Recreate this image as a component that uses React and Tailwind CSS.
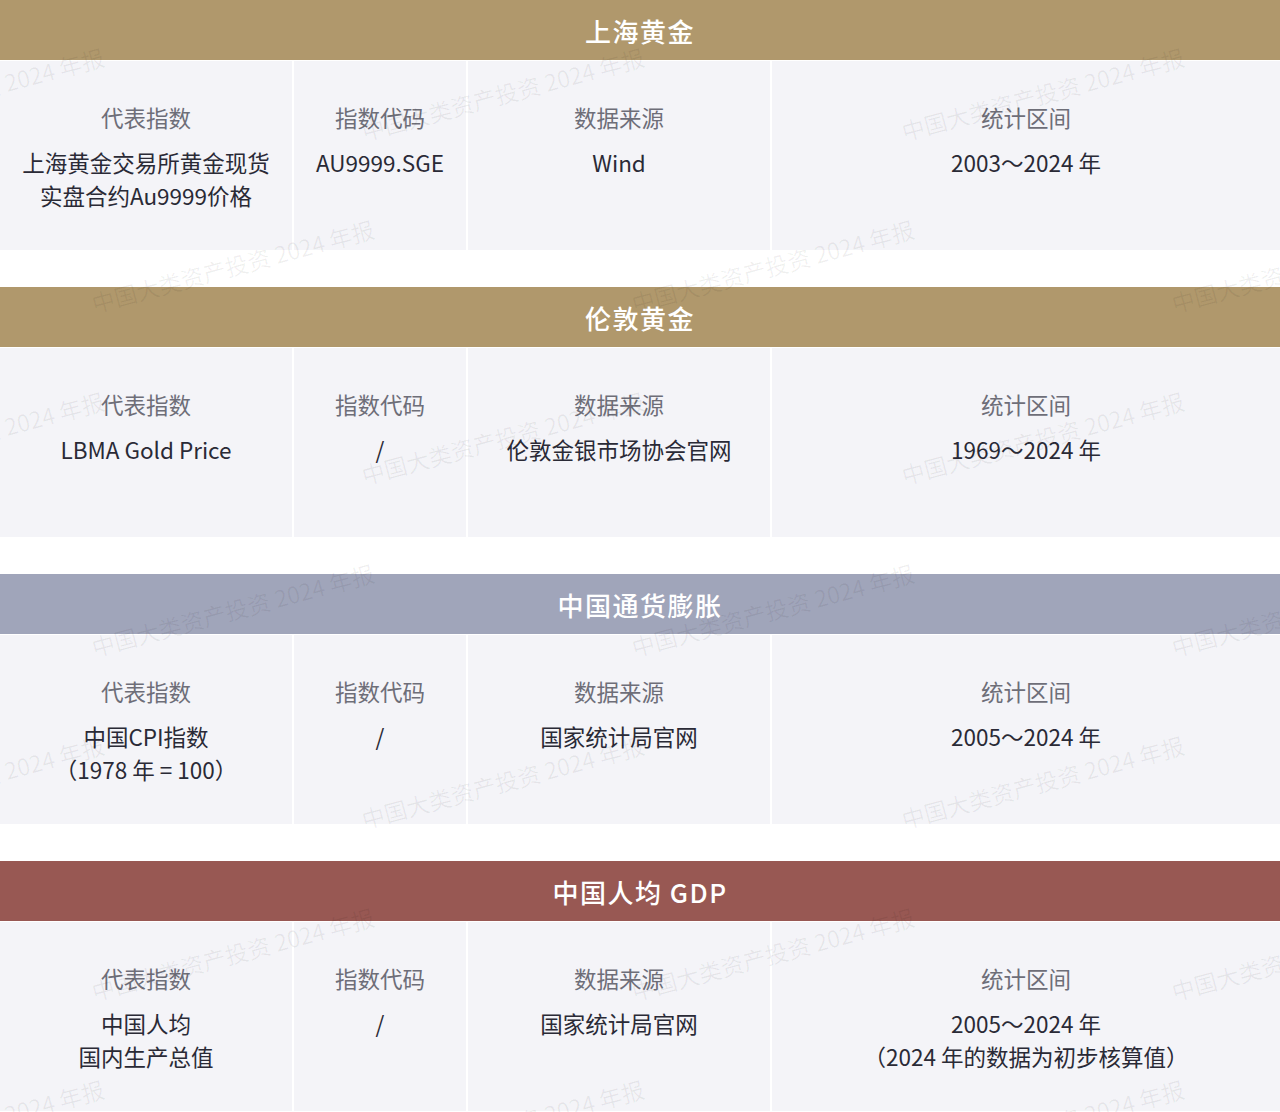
import React from "react";

const sections = [
  {
    title: "上海黄金",
    color: "bg-[#b0986c]",
    cells: [
      ["上海黄金交易所黄金现货", "实盘合约Au9999价格"],
      ["AU9999.SGE"],
      ["Wind"],
      ["2003～2024 年"],
    ],
  },
  {
    title: "伦敦黄金",
    color: "bg-[#b0986c]",
    cells: [["LBMA Gold Price"], ["/"], ["伦敦金银市场协会官网"], ["1969～2024 年"]],
  },
  {
    title: "中国通货膨胀",
    color: "bg-[#a0a5ba]",
    cells: [
      ["中国CPI指数", "（1978 年 = 100）"],
      ["/"],
      ["国家统计局官网"],
      ["2005～2024 年"],
    ],
  },
  {
    title: "中国人均 GDP",
    color: "bg-[#985853]",
    cells: [
      ["中国人均", "国内生产总值"],
      ["/"],
      ["国家统计局官网"],
      ["2005～2024 年", "（2024 年的数据为初步核算值）"],
    ],
  },
];

const labels = ["代表指数", "指数代码", "数据来源", "统计区间"];

function Cell({ label, lines }) {
  return (
    <div className="bg-[#f4f4f8] flex flex-col items-center pt-[40px] text-center">
      <div className="text-[22.5px] leading-[33px] text-[#6e6e78]">{label}</div>
      <div className="mt-[12px] text-[22.5px] leading-[33px] text-[#2a2a36]">
        {lines.map((l, i) => (
          <div key={i} className="whitespace-nowrap">{l}</div>
        ))}
      </div>
    </div>
  );
}

function Section({ s }) {
  return (
    <div className="mb-[37px]">
      <div
        className={`${s.color} h-[60px] flex items-center justify-center text-white text-[26px] tracking-[1.5px] font-medium`}
      >
        {s.title}
      </div>
      <div className="mt-px grid grid-cols-[292px_172px_302px_1fr] gap-[2px] h-[189px]">
        {s.cells.map((c, i) => (
          <Cell key={i} label={labels[i]} lines={c} />
        ))}
      </div>
    </div>
  );
}

const marks = [];
for (let r = 0; r < 7; r++) {
  const y = 143 + r * 172;
  const xs = r % 2 === 0 ? [-175, 365, 905] : [95, 635, 1175];
  xs.forEach((x) => marks.push({ x, y }));
}

export default function App() {
  return (
    <div
      className="relative w-[1280px] h-[1112px] overflow-hidden bg-white"
      style={{ fontFamily: '"Noto Sans CJK SC", "Noto Sans", sans-serif' }}
    >
      {sections.map((s, i) => (
        <Section key={i} s={s} />
      ))}
      <div className="pointer-events-none absolute inset-0">
        {marks.map((m, i) => (
          <span
            key={i}
            className="absolute whitespace-nowrap text-[23px] leading-[23px] text-black/[0.06] origin-bottom-left -rotate-[15deg]"
            style={{ left: m.x, top: m.y - 23 }}
          >
            中国大类资产投资 2024 年报
          </span>
        ))}
      </div>
    </div>
  );
}
